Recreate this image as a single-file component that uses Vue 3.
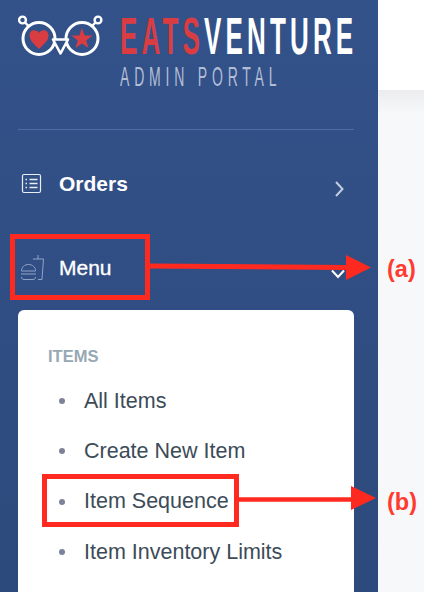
<script setup>
const items = ["All Items", "Create New Item", "Item Sequence", "Item Inventory Limits"];
</script>

<template>
  <div class="page">
    <aside class="sidebar">
      <div class="brand">
        <svg class="logo" width="90" height="46" viewBox="0 0 90 46" fill="none">
          <circle cx="4.500" cy="6" r="3.400" stroke="#fff" stroke-width="2.400" />
          <circle cx="80" cy="6" r="3.400" stroke="#fff" stroke-width="2.400" />
          <path d="M7 8.500l3.500 3.500M77.500 8.500l-3.500 3.500" stroke="#fff" stroke-width="2.400" />
          <circle cx="21" cy="24.500" r="16" stroke="#fff" stroke-width="3" />
          <circle cx="64" cy="24.500" r="16" stroke="#fff" stroke-width="3" />
          <path d="M35 25.500h15l-7.500 14z" fill="#325088" stroke="#fff" stroke-width="2.600" stroke-linejoin="round" />
          <path d="M21 35C16 30 11.500 26.500 11.500 21.500C11.500 15.500 18.500 14.500 21 19C23.500 14.500 30.500 15.500 30.500 21.500C30.500 26.500 26 30 21 35z" fill="#d93d42" />
          <path d="M64 14l2.600 7.400 7.900.2-6.300 4.800 2.300 7.500-6.500-4.500-6.500 4.500 2.300-7.500-6.300-4.800 7.900-.2z" fill="#d93d42" />
        </svg>
        <div class="wordmark">
          <div class="title"><span class="eats">EATS</span>VENTURE</div>
          <div class="subtitle">ADMIN PORTAL</div>
        </div>
      </div>
      <hr class="divider" />
      <nav>
        <div class="nav-row">
          <svg class="nav-icon" width="22" height="22" viewBox="0 0 22 22" fill="none" stroke="#e8edf6" stroke-width="1.200">
            <rect x="1.500" y="1.500" width="18" height="18" rx="1.500" />
            <path d="M8.500 6.500h8M8.500 10.500h8M8.500 14.500h8" stroke-width="1.600" />
            <path d="M4.500 6.500h1.500M4.500 10.500h1.500M4.500 14.500h1.500" stroke-width="1.600" />
          </svg>
          <span class="nav-label bold">Orders</span>
          <svg class="chevron" width="11" height="16" viewBox="0 0 11 16" fill="none">
            <path d="M2 1l6.500 7-6.500 7" stroke="#c3cde0" stroke-width="2" />
          </svg>
        </div>
        <div class="nav-row">
          <svg class="nav-icon" width="26" height="26" viewBox="0 0 26 26" fill="none" stroke="#8fa3c8" stroke-width="1">
            <path d="M1.500 16c0-4 3-6.500 7-6.500s7 2.500 7 6.500z" />
            <path d="M1 19h15M1.500 22c0 1.500 1 2.500 2.500 2.500h9c1.500 0 2.500-1 2.500-2.500" />
            <path d="M13 4h10.500l-1.500 20.500H18M18 4V0" />
          </svg>
          <span class="nav-label">Menu</span>
          <svg class="chevron lower" width="14" height="11" viewBox="0 0 14 11" fill="none">
            <path d="M1 1.500L7 8l6-6.500" stroke="#fff" stroke-width="2" />
          </svg>
        </div>
        <div class="submenu">
          <div class="sub-head">ITEMS</div>
          <ul>
            <li v-for="item in items" :key="item">{{ item }}</li>
          </ul>
        </div>
      </nav>
    </aside>
    <main class="content">
      <div class="topbar"></div>
    </main>

    <!-- annotations drawn over the screenshot -->
    <svg class="marks" width="424" height="592" viewBox="0 0 424 592" fill="none">
      <rect x="12.500" y="236.500" width="135" height="61" stroke="#ff2a1f" stroke-width="5" />
      <path d="M148 266l198 1.500" stroke="#ff2a1f" stroke-width="5" />
      <path d="M346 255l25 12.500-25 12.500z" fill="#ff2a1f" />
      <rect x="44.500" y="476.500" width="192" height="48" stroke="#ff2a1f" stroke-width="5" />
      <path d="M238 499.500h114" stroke="#ff2a1f" stroke-width="4.500" />
      <path d="M351 486l25 12-25 12z" fill="#ff2a1f" />
    </svg>
    <span class="mark-label label-a">(a)</span>
    <span class="mark-label label-b">(b)</span>
  </div>
</template>

<style>
html,
body {
  margin: 0;
  overflow: hidden;
}
</style>

<style scoped>
.page {
  position: relative;
  display: flex;
  width: 424px;
  height: 592px;
  overflow: hidden;
  font-family: "Liberation Sans", Arial, sans-serif;
}

.sidebar {
  position: relative;
  z-index: 1;
  width: 378px;
  height: 592px;
  flex-shrink: 0;
  box-sizing: border-box;
  padding: 14px 24px 0 18px;
  background: linear-gradient(#33528a, #2d4a7c);
}

.brand {
  display: flex;
  gap: 12px;
  height: 115px;
}

.logo {
  flex-shrink: 0;
}

.wordmark {
  width: 234px;
  white-space: nowrap;
}

.title,
.subtitle {
  transform: scaleX(0.5);
  transform-origin: left;
}

.title {
  font-size: 52px;
  font-weight: 700;
  line-height: 44px;
  letter-spacing: 8.300px;
  color: #fff;
}

.eats {
  color: #d93d42;
}

.subtitle {
  margin-top: 6px;
  font-size: 28px;
  line-height: 26px;
  letter-spacing: 9.600px;
  color: #b1bdd5;
}

.divider {
  margin: 0;
  border: 0;
  border-top: 1px solid #4f6ca6;
}

nav {
  padding-top: 12px;
}

.nav-row {
  display: flex;
  align-items: center;
  height: 84px;
  padding-left: 3px;
  color: #fff;
}

.nav-icon {
  flex-shrink: 0;
  margin-right: 16px;
}

.nav-row:nth-child(2) .nav-icon {
  margin: 0 13px 0 -1px;
}

.nav-label {
  font-size: 21px;
  font-weight: 400;
  -webkit-text-stroke: 0.35px #fff;
}

.nav-label.bold {
  font-weight: 700;
  -webkit-text-stroke: 0;
}

.chevron {
  margin: 10px 9px 0 auto;
}

.chevron.lower {
  margin-top: 12px;
}

.submenu {
  height: 282px;
  padding: 37px 30px 0;
  box-sizing: border-box;
  background: #fff;
  border-radius: 6px 6px 0 0;
}

.sub-head {
  font-size: 16.500px;
  line-height: 18px;
  font-weight: 700;
  color: #97a8b4;
}

ul {
  margin: 0;
  padding: 0;
  list-style: none;
}

li {
  display: flex;
  align-items: center;
  gap: 18px;
  height: 50.300px;
  padding-left: 11px;
  font-size: 21.500px;
  color: #3c4b58;
}

li:first-child {
  margin-top: 11px;
}

li::before {
  content: "";
  width: 6px;
  height: 6px;
  margin-right: 1px;
  border-radius: 50%;
  background: #7e8299;
}

.content {
  flex: 1;
  background: linear-gradient(#ececee, #f7f8fa 24px) 0 90px no-repeat, #f7f8fa;
}

.topbar {
  height: 90px;
  background: #fff;
}

.marks {
  position: absolute;
  z-index: 2;
  inset: 0;
}

.mark-label {
  position: absolute;
  z-index: 2;
  left: 387px;
  font-size: 23.500px;
  font-weight: 700;
  line-height: 28px;
  color: #ff3b30;
}

.label-a {
  top: 255px;
}

.label-b {
  top: 488px;
}
</style>
